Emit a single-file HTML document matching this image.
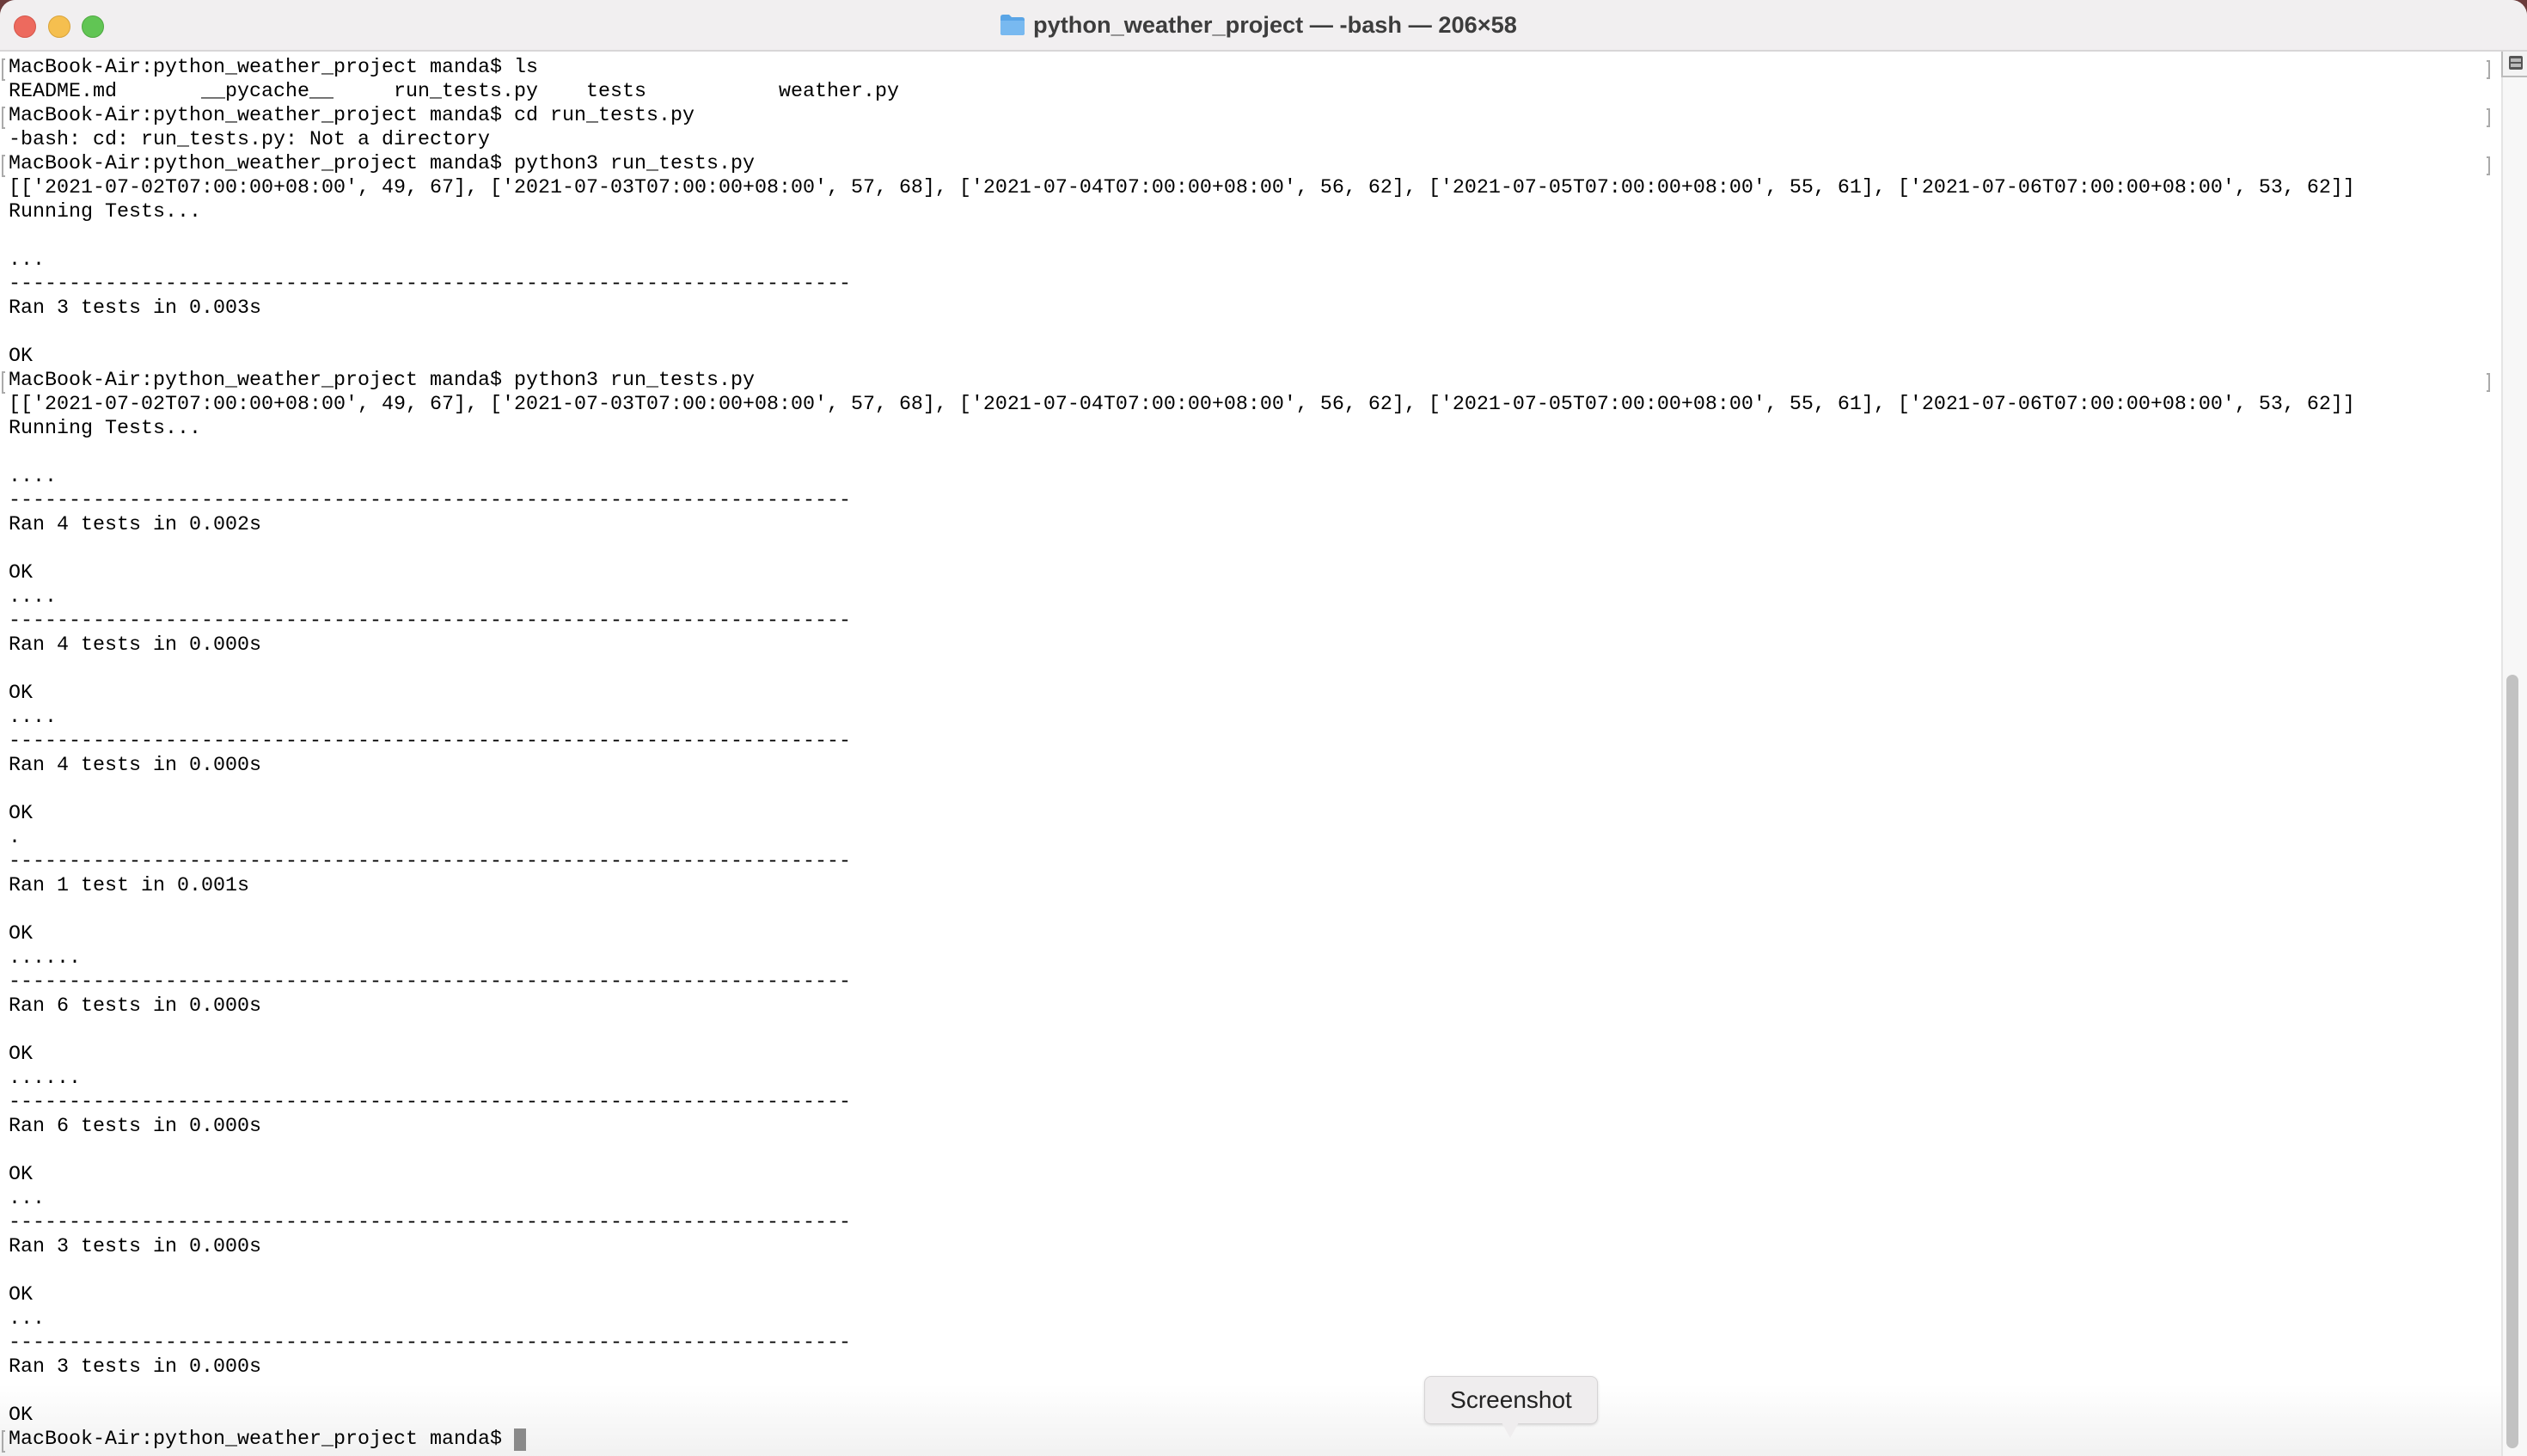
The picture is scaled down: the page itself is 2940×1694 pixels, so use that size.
<!DOCTYPE html>
<html><head><meta charset="utf-8"><style>
html,body{margin:0;padding:0;width:2940px;height:1694px;overflow:hidden;background:#6b3b3b;}
#win{position:absolute;left:0;top:0;width:2940px;height:1694px;background:#fff;border-radius:18px 18px 0 0;overflow:hidden;}
#title{position:absolute;left:0;top:0;width:2940px;height:58px;background:#f1eff0;border-bottom:2px solid #d8d6d7;}
.tl{position:absolute;top:18px;width:24px;height:24px;border-radius:50%;}
#ttext{position:absolute;left:1202px;top:13px;font:bold 27.2px "Liberation Sans",sans-serif;color:#3d3d3d;white-space:nowrap;}
#folder{position:absolute;left:1163px;top:16px;width:30px;height:26px;}
#term{position:absolute;left:10px;top:65px;font:23.33px/28px "Liberation Mono",monospace;color:#000;white-space:pre;margin:0;}
.lb{position:absolute;left:2px;height:22px;border:2px solid #aaa;border-right:none;width:2px;}
.rb{position:absolute;left:2893px;width:2px;height:18px;border:2px solid #aaa;border-left:none;}
#sb{position:absolute;left:2910px;top:60px;width:30px;height:1634px;background:#f7f7f7;border-left:2px solid #e4e4e4;}
#sbtop{position:absolute;left:2910px;top:60px;width:30px;height:28px;border-bottom:2px solid #bbb;border-left:2px solid #bbb;background:#f3f3f3;}
#thumb{position:absolute;left:2916px;top:785px;width:14px;height:900px;border-radius:7px;background:#c2c2c2;}
#shade{position:absolute;left:0;top:1610px;width:2910px;height:84px;background:linear-gradient(to bottom,rgba(245,245,245,0),rgba(238,238,238,.8));}
#tip{position:absolute;left:1657px;top:1601px;width:200px;height:54px;background:#efedee;border:1px solid #d6d4d5;border-radius:8px;font:28px "Liberation Sans",sans-serif;color:#222;text-align:center;line-height:54px;box-shadow:0 1px 3px rgba(0,0,0,.15);}
#arrow{position:absolute;left:1747px;top:1655px;width:0;height:0;border-left:10px solid transparent;border-right:10px solid transparent;border-top:18px solid #efedee;}
#cur{position:absolute;left:598px;top:1662px;width:14px;height:26px;background:#8a8a8a;}
</style></head><body>
<div id="win">
<div id="title">
<div class="tl" style="left:16px;background:#ed6a5e;border:1px solid #d5564b;"></div>
<div class="tl" style="left:56px;background:#f5bf4f;border:1px solid #d9a33a;"></div>
<div class="tl" style="left:95px;background:#61c554;border:1px solid #4ea940;"></div>
<svg id="folder" viewBox="0 0 30 26"><path d="M1 4 Q1 1 4 1 H11 L14 4 H26 Q29 4 29 7 V23 Q29 25 26 25 H4 Q1 25 1 23 Z" fill="#5aa5e6"/><path d="M1 8 H29 V23 Q29 25 26 25 H4 Q1 25 1 23 Z" fill="#78b9f0"/></svg>
<div id="ttext">python_weather_project — -bash — 206×58</div>
</div>
<div id="sb"></div><div id="sbtop"><div style="position:absolute;left:7px;top:5px;width:16px;height:16px;background:#555;border-radius:2px"><div style="position:absolute;left:2px;top:3px;width:12px;height:4px;background:#bbb"></div><div style="position:absolute;left:2px;top:9px;width:12px;height:4px;background:#bbb"></div></div></div>
<div id="thumb"></div>
<div id="shade"></div>
<pre id="term">MacBook-Air:python_weather_project manda$ ls
README.md       __pycache__     run_tests.py    tests           weather.py
MacBook-Air:python_weather_project manda$ cd run_tests.py
-bash: cd: run_tests.py: Not a directory
MacBook-Air:python_weather_project manda$ python3 run_tests.py
[['2021-07-02T07:00:00+08:00', 49, 67], ['2021-07-03T07:00:00+08:00', 57, 68], ['2021-07-04T07:00:00+08:00', 56, 62], ['2021-07-05T07:00:00+08:00', 55, 61], ['2021-07-06T07:00:00+08:00', 53, 62]]
Running Tests...

...
----------------------------------------------------------------------
Ran 3 tests in 0.003s

OK
MacBook-Air:python_weather_project manda$ python3 run_tests.py
[['2021-07-02T07:00:00+08:00', 49, 67], ['2021-07-03T07:00:00+08:00', 57, 68], ['2021-07-04T07:00:00+08:00', 56, 62], ['2021-07-05T07:00:00+08:00', 55, 61], ['2021-07-06T07:00:00+08:00', 53, 62]]
Running Tests...

....
----------------------------------------------------------------------
Ran 4 tests in 0.002s

OK
....
----------------------------------------------------------------------
Ran 4 tests in 0.000s

OK
....
----------------------------------------------------------------------
Ran 4 tests in 0.000s

OK
.
----------------------------------------------------------------------
Ran 1 test in 0.001s

OK
......
----------------------------------------------------------------------
Ran 6 tests in 0.000s

OK
......
----------------------------------------------------------------------
Ran 6 tests in 0.000s

OK
...
----------------------------------------------------------------------
Ran 3 tests in 0.000s

OK
...
----------------------------------------------------------------------
Ran 3 tests in 0.000s

OK
MacBook-Air:python_weather_project manda$ </pre>
<div class="lb" style="top:68px"></div>
<div class="lb" style="top:124px"></div>
<div class="lb" style="top:180px"></div>
<div class="lb" style="top:432px"></div>
<div class="lb" style="top:1664px"></div>
<div class="rb" style="top:70px"></div>
<div class="rb" style="top:126px"></div>
<div class="rb" style="top:182px"></div>
<div class="rb" style="top:434px"></div>
<div id="cur"></div>
<div id="tip">Screenshot</div>
<div id="arrow"></div>
</div>
</body></html>
